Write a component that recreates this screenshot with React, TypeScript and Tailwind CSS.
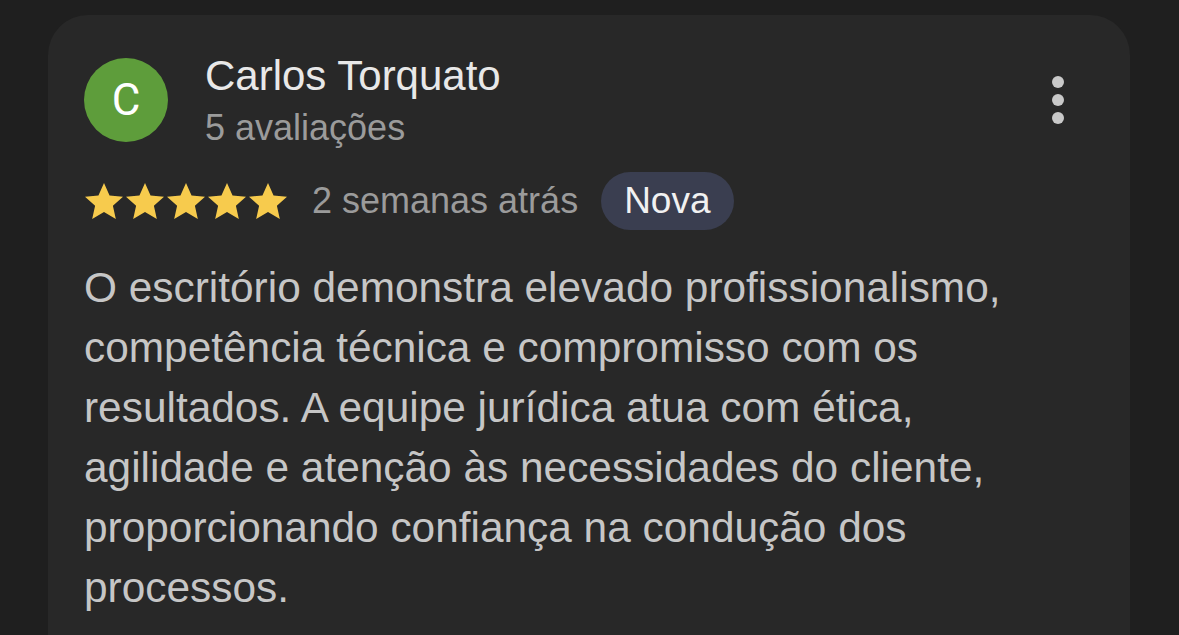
import React from 'react';

const lines = [
  'O escritório demonstra elevado profissionalismo,',
  'competência técnica e compromisso com os',
  'resultados. A equipe jurídica atua com ética,',
  'agilidade e atenção às necessidades do cliente,',
  'proporcionando confiança na condução dos',
  'processos.',
];

function Star() {
  return (
    <svg width="38" height="37" viewBox="2.6 2.6 18.8 18.2" className="shrink-0">
      <path
        d="M12 2.6l2.75 6.1 6.65.65-5 4.45 1.45 6.55L12 16.95 6.15 20.35 7.6 13.8l-5-4.45 6.65-.65z"
        fill="#f7cb4d"
      />
    </svg>
  );
}

export default function App() {
  return (
    <div className="w-[1179px] h-[635px] overflow-hidden bg-[#1f1f1f] pt-[15px] pl-[48px] pr-[49px] font-['Liberation_Sans',Arial,sans-serif]">
      <div className="h-[700px] rounded-[40px] bg-[#282828] pl-[36px] pr-[66px] pt-[42px]">
        <div className="flex items-start">
          <div className="w-[84px] h-[84px] rounded-full bg-[#5e9d3b] flex items-center justify-center text-white text-[44px] leading-none mt-[1px] font-['Roboto',sans-serif]">
            C
          </div>
          <div className="ml-[37px] flex-1 -mt-[6px]">
            <div className="text-[42px] leading-[50px] text-[#e8e8e8]">Carlos Torquato</div>
            <div className="text-[36px] leading-[40px] text-[#9b9b9b] mt-[7px]">5 avaliações</div>
          </div>
          <div className="flex flex-col items-center gap-[6px] mt-[19px]">
            <span className="w-[12px] h-[12px] rounded-full bg-[#c9c9c9]" />
            <span className="w-[12px] h-[12px] rounded-full bg-[#c9c9c9]" />
            <span className="w-[12px] h-[12px] rounded-full bg-[#c9c9c9]" />
          </div>
        </div>

        <div className="flex items-center mt-[24px]">
          <div className="flex items-center gap-[3px] ml-[1px]">
            {[0, 1, 2, 3, 4].map((i) => (
              <Star key={i} />
            ))}
          </div>
          <span className="ml-[25px] text-[36px] text-[#9b9b9b]">2 semanas atrás</span>
          <span className="ml-[23px] h-[58px] px-[23px] rounded-full bg-[#3a3e50] text-[#f1f1f1] text-[37px] flex items-center">
            Nova
          </span>
        </div>

        <div className="mt-[28px] text-[42.4px] leading-[60px] text-[#c6c6c6]">
          {lines.map((l, i) => (
            <div key={i}>{l}</div>
          ))}
        </div>
      </div>
    </div>
  );
}
